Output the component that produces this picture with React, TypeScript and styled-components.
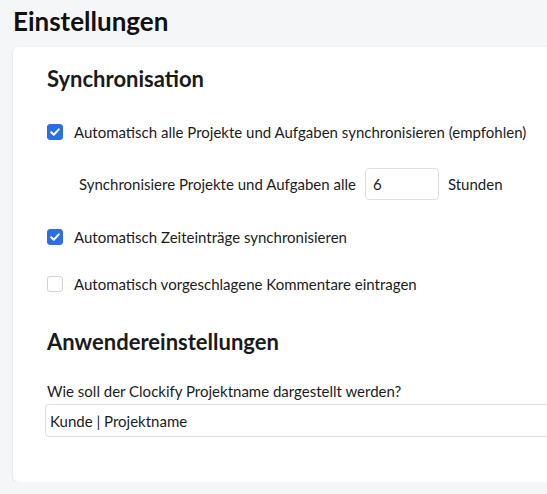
import React from "react";
import styled, { createGlobalStyle } from "styled-components";

const GlobalStyle = createGlobalStyle`
  html, body {
    margin: 0;
    padding: 0;
    background: #f5f6f8;
    font-family: "Lato", "Liberation Sans", sans-serif;
    color: #1c1c1e;
    overflow: hidden;
  }
`;

const Page = styled.div`
  width: 620px;
  padding: 6px 0 0 13px;
  box-sizing: border-box;
`;

const PageTitle = styled.h1`
  margin: 0 0 11px;
  font-size: 26px;
  font-weight: 700;
  line-height: 30px;
  color: #111;
`;

const Card = styled.div`
  background: #fff;
  border-radius: 5px;
  box-shadow: 0 1px 3px rgba(0, 0, 0, 0.12);
  padding: 19px 0 0 34px;
  height: 435px;
  box-sizing: border-box;
`;

const SectionTitle = styled.h2<{ $top?: number }>`
  margin: ${(p) => p.$top ?? 0}px 0 0;
  font-size: 22px;
  font-weight: 700;
  line-height: 26px;
  color: #1a1a1a;
`;

const CheckRow = styled.label<{ $top: number }>`
  display: flex;
  align-items: center;
  gap: 11px;
  margin-top: ${(p) => p.$top}px;
  font-size: 15px;
  line-height: 20px;
  cursor: pointer;
`;

const Box = styled.span<{ $checked: boolean }>`
  width: 16px;
  height: 16px;
  box-sizing: border-box;
  border-radius: 3px;
  flex: none;
  display: flex;
  align-items: center;
  justify-content: center;
  background: ${(p) => (p.$checked ? "#2c6fe4" : "#fff")};
  border: 1px solid ${(p) => (p.$checked ? "#2c6fe4" : "#cfd2d6")};
`;

const IntervalRow = styled.div`
  display: flex;
  align-items: center;
  margin: 26px 0 0 32px;
  font-size: 15px;
  gap: 9px;
`;

const SmallInput = styled.div`
  width: 74px;
  height: 32px;
  box-sizing: border-box;
  border: 1px solid #dcdfe3;
  border-radius: 4px;
  display: flex;
  align-items: center;
  padding-left: 7px;
  font-size: 15px;
`;

const FieldLabel = styled.div`
  margin-top: 26px;
  font-size: 15px;
  line-height: 20px;
`;

const WideInput = styled.div`
  margin: 3px 0 0 -2px;
  height: 33px;
  box-sizing: border-box;
  border: 1px solid #dcdfe3;
  border-right: none;
  border-radius: 4px 0 0 4px;
  display: flex;
  align-items: center;
  padding-left: 4px;
  font-size: 15px;
`;

const Tick = () => (
  <svg width="12" height="12" viewBox="0 0 12 12">
    <path d="M2.2 6.2 4.8 8.7 9.8 3.4" fill="none" stroke="#fff" strokeWidth="2" strokeLinecap="round" strokeLinejoin="round" />
  </svg>
);

const Check = ({ checked, label, top }: { checked: boolean; label: string; top: number }) => (
  <CheckRow $top={top}>
    <Box $checked={checked}>{checked && <Tick />}</Box>
    {label}
  </CheckRow>
);

export default function App() {
  return (
    <>
      <GlobalStyle />
      <Page>
        <PageTitle>Einstellungen</PageTitle>
        <Card>
          <SectionTitle>Synchronisation</SectionTitle>
          <Check top={30} checked label="Automatisch alle Projekte und Aufgaben synchronisieren (empfohlen)" />
          <IntervalRow>
            Synchronisiere Projekte und Aufgaben alle
            <SmallInput>6</SmallInput>
            Stunden
          </IntervalRow>
          <Check top={27} checked label="Automatisch Zeiteinträge synchronisieren" />
          <Check top={27} checked={false} label="Automatisch vorgeschlagene Kommentare eintragen" />
          <SectionTitle $top={35}>Anwendereinstellungen</SectionTitle>
          <FieldLabel>Wie soll der Clockify Projektname dargestellt werden?</FieldLabel>
          <WideInput>Kunde | Projektname</WideInput>
        </Card>
      </Page>
    </>
  );
}
